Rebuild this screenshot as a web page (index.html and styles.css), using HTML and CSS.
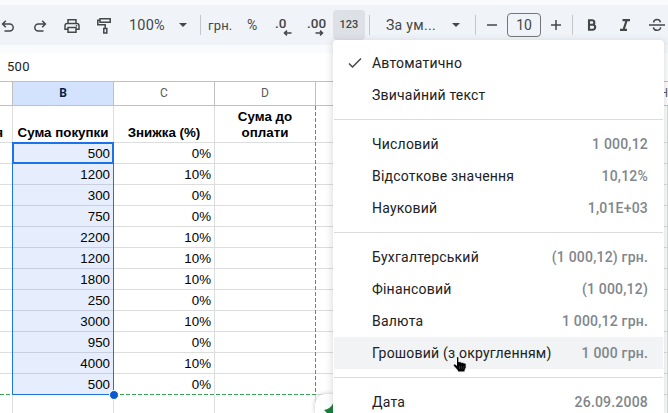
FILE: index.html
```html
<!DOCTYPE html>
<html lang="uk">
<head>
<meta charset="utf-8">
<title>Таблиця</title>
<link rel="stylesheet" href="styles.css">
</head>
<body>
<div class="app">
  <div class="toolbar">
    <span class="tool undo"><svg width="16" height="16" viewBox="0 0 16 16"><path d="M4.5 13h5.2a3.3 3.3 0 0 0 0-7H2.8M5.8 2.8 2.6 6l3.2 3.2"/></svg></span>
    <span class="tool redo"><svg width="16" height="16" viewBox="0 0 16 16"><path d="M11.5 13H6.3a3.3 3.3 0 0 1 0-7h6.9M10.2 2.8 13.4 6l-3.2 3.2"/></svg></span>
    <span class="tool print"><svg width="16" height="16" viewBox="0 0 16 16"><path d="M4 5.2V1.8h8v3.4M4 11.2H1V7.7a2.2 2.2 0 0 1 2.2-2.2h9.6A2.2 2.2 0 0 1 15 7.7v3.5h-3M4 9.5h8v4.7H4z"/><path class="solid" d="M11.8 7h1.4v1.4h-1.4z"/></svg></span>
    <span class="tool paint"><svg width="16" height="18" viewBox="0 0 16 18"><path d="M4 1.8h10.2v3.5H4zM4 3.2H1.8v4.6h7.4v3M7.8 11.5h3v4.6h-3z"/></svg></span>
    <span class="zoom">100%</span><i class="arrow"></i>
    <i class="divider d1"></i>
    <span class="currency">грн.</span>
    <span class="percent">%</span>
    <span class="decimal dec">.0<svg width="9" height="6" viewBox="0 0 9 6"><path d="M8.5 3H1.5M4 .6 1.5 3 4 5.4"/></svg></span>
    <span class="decimal inc">.00<svg width="9" height="6" viewBox="0 0 9 6"><path d="M.5 3h7M5 .6 7.5 3 5 5.4"/></svg></span>
    <span class="formats">123</span>
    <i class="divider d2"></i>
    <span class="font">За ум...</span><i class="arrow"></i>
    <i class="divider d3"></i>
    <span class="tool minus"><svg width="12" height="12" viewBox="0 0 12 12"><path d="M1 6h10"/></svg></span>
    <span class="size">10</span>
    <span class="tool plus"><svg width="12" height="12" viewBox="0 0 12 12"><path d="M1 6h10M6 1v10"/></svg></span>
    <i class="divider d4"></i>
    <span class="tool bold"><svg width="10" height="12" viewBox="0 0 10 12"><path class="heavy" d="M2 1.2h3.1a2.2 2.2 0 0 1 0 4.5H2zM2 5.7h3.7a2.5 2.5 0 0 1 0 5H2z"/></svg></span>
    <span class="tool italic"><svg width="12" height="12" viewBox="0 0 12 12"><path class="heavy" d="M3.5 1.1H11M1 10.900h7M7.700 1.100 4.500 10.900"/></svg></span>
    <span class="tool strike"><svg width="16" height="14" viewBox="0 0 16 14"><path d="M0 6.9h16M11.5 4.4C11 2.4 9.900 1.600 8 1.600S4.800 2.700 4.600 4.500M4.400 9.300c.3 2 1.600 3 3.600 3s3.500-1 3.600-3"/></svg></span>
  </div>
  <div class="formula">500</div>
  <div class="sheet">
    <div class="row letters"><div></div><div class="picked">B</div><div>C</div><div>D</div><div></div><div class="last"><span>H</span></div></div>
    <div class="row titles"><div>я</div><div>Сума покупки</div><div>Знижка (%)</div><div>Сума до<br>оплати</div><div></div></div>
    <div class="row"><div></div><div class="sel">500</div><div>0%</div><div></div><div></div></div>
    <div class="row"><div></div><div class="sel">1200</div><div>10%</div><div></div><div></div></div>
    <div class="row"><div></div><div class="sel">300</div><div>0%</div><div></div><div></div></div>
    <div class="row"><div></div><div class="sel">750</div><div>0%</div><div></div><div></div></div>
    <div class="row"><div></div><div class="sel">2200</div><div>10%</div><div></div><div></div></div>
    <div class="row"><div></div><div class="sel">1200</div><div>10%</div><div></div><div></div></div>
    <div class="row"><div></div><div class="sel">1800</div><div>10%</div><div></div><div></div></div>
    <div class="row"><div></div><div class="sel">250</div><div>0%</div><div></div><div></div></div>
    <div class="row"><div></div><div class="sel">3000</div><div>10%</div><div></div><div></div></div>
    <div class="row"><div></div><div class="sel">950</div><div>0%</div><div></div><div></div></div>
    <div class="row"><div></div><div class="sel">4000</div><div>10%</div><div></div><div></div></div>
    <div class="row"><div></div><div class="sel">500</div><div>0%</div><div></div><div></div></div>
    <div class="row end"><div></div><div></div><div></div><div></div><div></div></div>
    <svg class="range" width="668" height="332" viewBox="0 0 668 332"><path class="under" d="M315.5 25v289M0 313.5h315"/><path class="dash" d="M315.5 25v289M0 313.5h315"/><path class="outline" d="M12.5 61.500h101v252h-101z"/><path class="cell" d="M13 62h100v20H13z"/><circle cx="114" cy="314" r="4.5"/></svg>
  </div>
</div>
<div class="chip"><svg width="20" height="19" viewBox="0 0 20 19"><path d="M20 5C18 11 15 15 9 16l4 4h7z"/></svg></div>
<div class="menu">
  <div class="item"><svg class="check" width="14" height="12" viewBox="0 0 14 12"><path d="M1 6.5 4.5 10 13 1.5"/></svg><span>Автоматично</span></div>
  <div class="item"><span>Звичайний текст</span></div>
  <hr>
  <div class="item"><span>Числовий</span><b>1 000,12</b></div>
  <div class="item"><span>Відсоткове значення</span><b>10,12%</b></div>
  <div class="item"><span>Науковий</span><b>1,01E+03</b></div>
  <hr>
  <div class="item"><span>Бухгалтерський</span><b>(1 000,12) грн.</b></div>
  <div class="item"><span>Фінансовий</span><b>(1 000,12)</b></div>
  <div class="item"><span>Валюта</span><b>1 000,12 грн.</b></div>
  <div class="item hover"><span>Грошовий (з округленням)</span><b>1 000 грн.</b></div>
  <hr>
  <div class="item"><span>Дата</span><b>26.09.2008</b></div>
</div>
<svg class="cursor" width="18" height="18" viewBox="0 0 18 18"><path d="M4.5 2.2c0-2 2.4-2 2.400 0V6c.6-.7 2.200-.5 2.400.5.7-.6 2.200-.3 2.400.6 1.100-.4 2.500.1 2.500 1.400v3.300l-1.200 2.400V16H5.500v-1.600L2 10.500c-1.700-2 .2-3.400 1.700-2l.8.8z"/><path class="knuckles" d="M7.5 10v3M9.700 10v3M11.900 10v3"/></svg>
</body>
</html>
```

FILE: styles.css
```css
* { box-sizing: border-box; }
body { margin: 0; width: 668px; height: 413px; overflow: hidden; position: relative; background: #fff; font-family: Roboto, "Liberation Sans", sans-serif; }
.app { width: 668px; height: 413px; overflow: hidden; background: #f9fbfd; padding-top: 5px; }
.toolbar { display: flex; align-items: center; height: 40px; background: #f0f4f9; color: #444746; font-size: 14px; white-space: nowrap; }
.toolbar > * { flex: none; }
.tool { display: flex; justify-content: center; }
.tool path, .decimal path { fill: none; stroke: #444746; stroke-width: 1.5; }
.tool .solid { fill: #444746; stroke: none; }
.tool .heavy { stroke-width: 2.1; }
.undo { margin-top: 2px; }
.redo { margin: 2px 0 0 16px; }
.print { margin: 2px 0 0 16px; }
.paint { margin: 2px 0 0 16px; }
.zoom { width: 37px; margin-left: 17px; font-size: 14.5px; letter-spacing: .2px; }
.arrow { width: 0; height: 0; border: 4px solid transparent; border-top-color: #444746; border-bottom: 0; margin-left: 13px; }
.divider { width: 1px; height: 20px; background: #c7c7c7; }
.d1 { margin-left: 13px; }
.currency { margin-left: 7px; width: 25px; font-size: 13px; letter-spacing: .2px; }
.percent { margin-left: 14px; width: 12px; font-size: 14px; }
.decimal { position: relative; font-weight: 500; font-size: 13.5px; height: 20px; line-height: 16px; }
.decimal svg { position: absolute; bottom: -1px; }
.dec { margin-left: 16px; width: 17px; }
.dec svg { left: 8px; }
.inc { margin-left: 15px; width: 19px; }
.inc svg { left: 8px; }
.formats { margin-left: 7px; width: 32px; height: 30px; line-height: 30px; text-align: center; background: #dde1e6; border-radius: 4px; font-weight: 500; font-size: 11px; }
.d2 { margin-left: 4px; }
.font { margin-left: 16px; width: 54px; letter-spacing: .3px; }
.d3 { margin-left: 15px; }
.font + .arrow { margin-left: 12px; }
.minus { margin-left: 10px; }
.size { margin-left: 9px; width: 34px; height: 24px; line-height: 22px; border: 1px solid #747775; border-radius: 4px; text-align: center; }
.plus { margin-left: 9px; }
.d4 { margin-left: 10px; }
.bold { margin-left: 14px; }
.italic { margin-left: 22px; }
.strike { margin-left: 18px; }
.formula { height: 28px; margin-top: 8px; background: #fff; padding-left: 7px; line-height: 27px; font-size: 13px; letter-spacing: .3px; color: #202124; }
.sheet { position: relative; height: 332px; overflow: hidden; background: #fff; font-family: "Liberation Sans", Arial, sans-serif; }
.row { display: grid; grid-template-columns: 13px 101px 101px 101px 352px; height: 21px; font-size: 13.333px; color: #000; }
.row > div { border-right: 1px solid #dcdddd; border-bottom: 1px solid #dcdddd; line-height: 20px; text-align: right; padding: 1px 3px 0 0; height: 21px; }
.row.end, .row.end > div { height: 18px; border-bottom: 0; }
.row .sel { background: #e6eefd; border-bottom-color: #c9cfdc; }
.row.letters { grid-template-columns: 13px 101px 101px 101px 336px 16px; height: 25px; font-family: Roboto, sans-serif; font-size: 12px; color: #575b5f; }
.letters > div { height: 25px; border-top: 1px solid #c0c0c0; border-right-color: #c0c0c0; border-bottom-color: #c0c0c0; line-height: 23px; text-align: center; padding: 0; }
.letters .picked { background: #d3e3fd; color: #041e49; font-weight: 700; }
.letters .last { text-align: right; border-right: 0; }
.row.titles { height: 37px; font-weight: 700; }
.titles > div { height: 37px; display: flex; align-items: flex-end; justify-content: center; text-align: center; line-height: 16px; padding: 0 0 1px; white-space: nowrap; }
.titles > div:first-child { justify-content: flex-end; padding-right: 9px; }
.range { position: absolute; left: 0; top: 0; }
.range path { fill: none; stroke: #1a73e8; }
.range .cell { stroke-width: 2; }
.range .under { stroke: #fff; }
.range .dash { stroke: #34a853; stroke-dasharray: 4 2; }
.range circle { fill: #0b57d0; stroke: #fff; stroke-width: 1; }
.chip { position: absolute; left: 315px; top: 394px; width: 40px; height: 19px; border-radius: 10px 0 0 0; background: #fff; box-shadow: 0 0 4px rgba(60,64,67,.3); }
.chip svg { position: absolute; left: 0; top: 0; }
.chip path { fill: #188038; }
.menu { position: absolute; left: 333px; top: 40px; width: 331px; height: 373px; overflow: hidden; background: #fff; border-radius: 4px 4px 0 0; padding: 7px 0 0 1px; box-shadow: 0 2px 6px 2px rgba(60,64,67,.15); }
.item { position: relative; display: flex; justify-content: space-between; height: 32px; line-height: 32px; padding: 0 16px 0 38px; font-size: 14px; letter-spacing: .2px; color: #202124; white-space: nowrap; }
.item b { font-weight: 500; color: #80868b; }
.item.hover { background: #f1f3f4; margin-right: 1px; padding-right: 15px; }
.check { position: absolute; left: 14px; top: 10px; }
.check path { fill: none; stroke: #444746; stroke-width: 1.5; }
.menu hr { height: 1px; border: 0; margin: 8px 1px 8px 0; background: #dadce0; }
.cursor { position: absolute; left: 452px; top: 356px; }
.cursor path { fill: #000; stroke: #fff; stroke-width: 1; }
.cursor .knuckles { fill: none; stroke: #555; stroke-width: .6; }
```
